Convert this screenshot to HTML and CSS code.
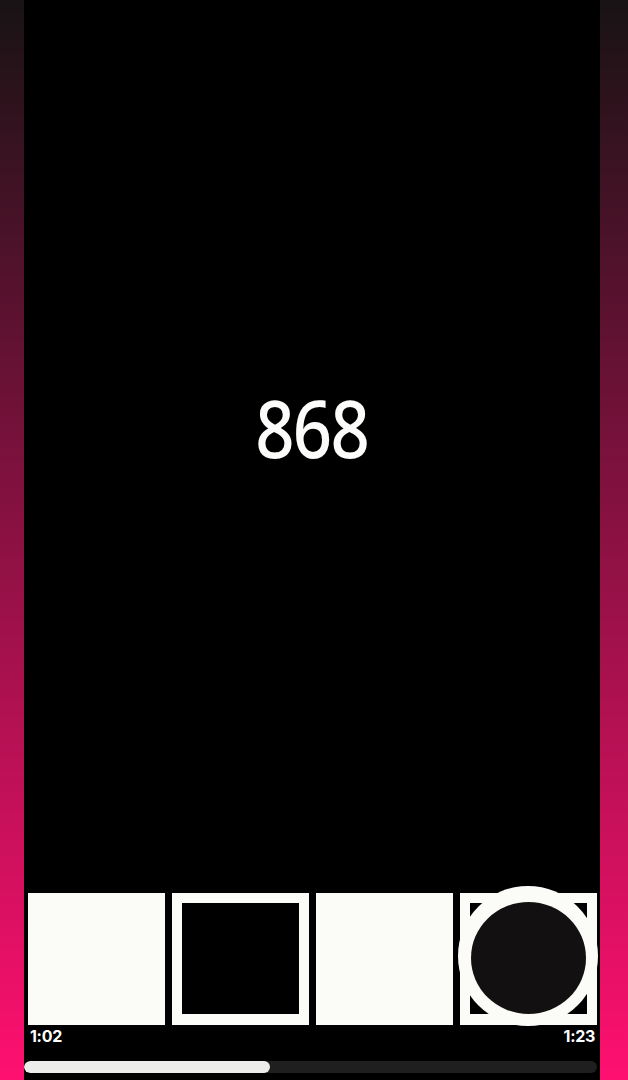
FILE: index.html
```html
<!DOCTYPE html>
<html lang="en">
<head>
<meta charset="utf-8">
<title>868</title>
<link rel="stylesheet" href="styles.css">
</head>
<body>
<div class="app">
  <main class="screen">
    <section class="stage">
      <div class="count">868</div>
    </section>
    <section class="strip">
      <div class="thumb thumb-white"></div>
      <div class="thumb thumb-frame"><div class="inner"></div></div>
      <div class="thumb thumb-white"></div>
      <div class="thumb thumb-frame thumb-last">
        <div class="inner"></div>
        <div class="ring"></div>
        <div class="dot"></div>
      </div>
    </section>
    <div class="times">
      <span>1:02</span>
      <span>1:23</span>
    </div>
    <div class="progress">
      <div class="fill" style="width: 246px"></div>
    </div>
  </main>
</div>
</body>
</html>
```
FILE: styles.css
```css
html, body {
  margin: 0;
  padding: 0;
}
body {
  width: 628px;
  height: 1080px;
  overflow: hidden;
  background: linear-gradient(to bottom, #181314 0%, #8c1143 50%, #ff1070 100%);
  font-family: "Noto Sans", "DejaVu Sans", sans-serif;
}
.app {
  display: flex;
  height: 1080px;
  padding: 0 28px 0 24px;
}
.screen {
  flex: 1;
  background: #000;
  display: flex;
  flex-direction: column;
}
.stage {
  height: 858px;
  display: flex;
  align-items: center;
  justify-content: center;
  margin-bottom: 35px;
}
.count {
  color: #fcfcfa;
  font-size: 80px;
  font-weight: 500;
  letter-spacing: -2px;
  line-height: 1;
  margin-top: -4px;
  transform: scaleX(0.86);
}
.strip {
  display: flex;
  gap: 7px;
  padding: 0 3px 0 4px;
  height: 132px;
}
.thumb {
  width: 137px;
  height: 132px;
  flex: none;
  background: #fbfcf8;
  box-sizing: border-box;
}
.thumb-frame {
  padding: 10px 10px 11px 10px;
  position: relative;
}
.thumb-frame .inner {
  width: 100%;
  height: 100%;
  background: #000;
}
.thumb-last .ring {
  position: absolute;
  left: -2px;
  top: -7px;
  width: 140px;
  height: 140px;
  border-radius: 50%;
  background: #fbfcf8;
}
.thumb-last .dot {
  position: absolute;
  left: 11px;
  top: 9px;
  width: 115px;
  height: 112px;
  border-radius: 50%;
  background: #131011;
}
.times {
  display: flex;
  justify-content: space-between;
  padding: 0 5px 0 6px;
  margin-top: 2px;
  color: #fff;
  font-family: "Inter", "Noto Sans", sans-serif;
  font-weight: 700;
  font-size: 16px;
  line-height: 18px;
  letter-spacing: -0.3px;
}
.progress {
  margin-top: 16px;
  width: 573px;
  height: 12px;
  border-radius: 6px;
  background: #1f1f1f;
  overflow: hidden;
}
.fill {
  height: 100%;
  border-radius: 6px;
  background: #ececea;
}
```
